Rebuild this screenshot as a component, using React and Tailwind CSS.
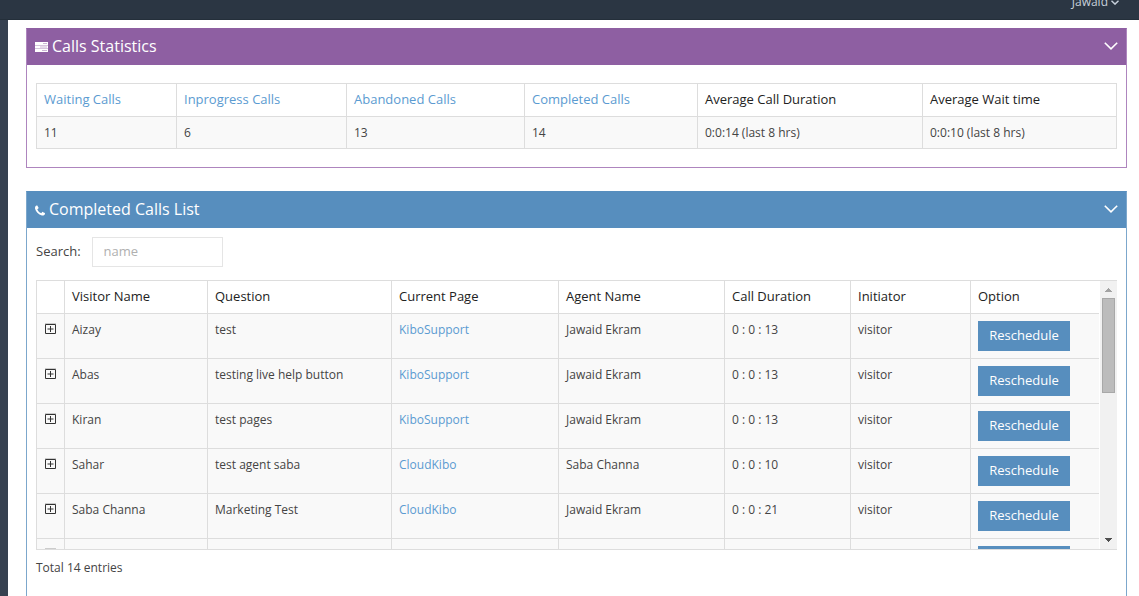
import { useState } from "react";

const STATS = [
  { label: "Waiting Calls", value: "11", link: true, width: "w-[140px]" },
  { label: "Inprogress Calls", value: "6", link: true, width: "w-[170px]" },
  { label: "Abandoned Calls", value: "13", link: true, width: "w-[178px]" },
  { label: "Completed Calls", value: "14", link: true, width: "w-[173px]" },
  { label: "Average Call Duration", value: "0:0:14 (last 8 hrs)", width: "w-[225px]" },
  { label: "Average Wait time", value: "0:0:10 (last 8 hrs)", width: "w-[194px]" },
];

const COLUMNS = [
  { label: "Visitor Name", width: "w-[143px]" },
  { label: "Question", width: "w-[184px]" },
  { label: "Current Page", width: "w-[167px]" },
  { label: "Agent Name", width: "w-[166px]" },
  { label: "Call Duration", width: "w-[126px]" },
  { label: "Initiator", width: "w-[120px]" },
  { label: "Option", width: "w-[129px]" },
];

const CALLS = [
  ["Aizay", "test", "KiboSupport", "Jawaid Ekram", "0 : 0 : 13", "visitor"],
  ["Abas", "testing live help button", "KiboSupport", "Jawaid Ekram", "0 : 0 : 13", "visitor"],
  ["Kiran", "test pages", "KiboSupport", "Jawaid Ekram", "0 : 0 : 13", "visitor"],
  ["Sahar", "test agent saba", "CloudKibo", "Saba Channa", "0 : 0 : 10", "visitor"],
  ["Saba Channa", "Marketing Test", "CloudKibo", "Jawaid Ekram", "0 : 0 : 21", "visitor"],
  ["", "", "", "", "", ""],
];

function TasksIcon() {
  return (
    <svg className="h-[10px] w-[13px]" viewBox="0 0 13 10" fill="none" aria-hidden="true">
      <path fill="#fff" d="M0 0h13v3H0zM0 3.500h13v3H0zM0 7h13v3H0z" />
      <path fill="#8e5fa2" opacity=".45" d="M8 1h4v1H8zM5 4.500h7v1H5zM7 8h5v1H7z" />
      <path fill="#fff" opacity=".55" d="M0 3h13v.5H0zM0 6.500h13v.5H0z" />
    </svg>
  );
}

function PhoneIcon() {
  return (
    <svg className="h-[11px] w-[10px]" viewBox="0 0 1408 1408" fill="#fff" aria-hidden="true">
      <path d="M1408 1112q0 27-10 70.500t-21 68.500q-21 50-122 106-94 51-186 51-27 0-53-3.500t-57.500-12.500-47-14.500-55.500-20.500-49-18q-98-35-175-83-127-79-264-216T152 776q-48-77-83-175-3-9-18-49T30.500 496.500 16 449.500 3.500 392 0 339q0-92 51-186Q107 52 157 31q25-11 68.500-21T296 0q14 0 21 3 18 6 53 76 11 19 30 54t35 63.500 31 53.500q3 4 17.500 25t21.500 35.500 7 28.500q0 20-28.500 50t-62 55-62 53-28.500 46q0 9 5 22.500t8.500 20.500 14 24 11.500 19q76 137 174 235t235 174q2 1 19 11.500t24 14 20.500 8.500 22.500 5q18 0 46-28.500t53-62 55-62 50-28.500q14 0 28.500 7t35.500 21.500 25 17.500q25 15 53.500 31t63.500 35 54 30q70 35 76 53 3 7 3 21z" />
    </svg>
  );
}

function ExpandIcon() {
  return (
    <svg className="block h-3 w-[11px]" viewBox="0 0 11 12" fill="none" stroke="#333" aria-hidden="true">
      <path stroke="#ccc" d="M0 .5h11" />
      <path d="M.5 1.500h10v9H.5zM2.500 6h6M5.500 3v6" />
    </svg>
  );
}

function Chevron({ className, stroke }) {
  return (
    <svg className={className} viewBox="0 0 14 8" fill="none" stroke="currentColor" aria-hidden="true">
      <path strokeWidth={stroke} d="M.8.8 7 6.800 13.200.8" />
    </svg>
  );
}

function Panel({ title, icon, frame, bar, children }) {
  const [open, setOpen] = useState(true);
  return (
    <section className={`border ${frame}`}>
      <header className={`flex h-9 items-center justify-between px-2 pb-[2px] text-white ${bar}`}>
        <h2 className="flex items-center gap-1 text-[16px] leading-5">
          <span className="pt-[2px]">{icon}</span>
          {title}
        </h2>
        <button type="button" aria-label={`Toggle ${title}`} aria-expanded={open} onClick={() => setOpen(!open)}>
          <Chevron className="h-2 w-[14px]" stroke="1.6" />
        </button>
      </header>
      {open && children}
    </section>
  );
}

function StatsTable() {
  return (
    <table className="w-full table-fixed border-separate border-spacing-0 border-r border-b border-[#ddd] text-left">
      <thead>
        <tr>
          {STATS.map((s) => (
            <th key={s.label} className={`h-[33px] border-t border-l border-[#ddd] px-[7px] text-[13px] font-medium text-[#222] ${s.width}`}>
              {s.link ? <a href="#" className="text-[#5b9bd1]">{s.label}</a> : s.label}
            </th>
          ))}
        </tr>
      </thead>
      <tbody>
        <tr>
          {STATS.map((s) => (
            <td key={s.label} className="h-8 border-t border-l border-[#ddd] bg-[#f9f9f9] px-[7px]">
              {s.value}
            </td>
          ))}
        </tr>
      </tbody>
    </table>
  );
}

function CallsTable() {
  const cell = "h-[45px] border-t border-l border-[#ddd] px-[7px] pt-[7px] align-top leading-[18px]";
  return (
    <table className="w-full table-fixed border-separate border-spacing-0 text-left">
      <thead>
        <tr>
          <th className="h-8 w-7 border-l border-[#ddd]" aria-label="Details" />
          {COLUMNS.map((c) => (
            <th key={c.label} className={`h-8 border-l border-[#ddd] px-[7px] text-[13px] font-medium text-[#222] ${c.width}`}>
              {c.label}
            </th>
          ))}
        </tr>
      </thead>
      <tbody className="bg-[#f9f9f9]">
        {CALLS.map(([name, question, page, agent, duration, initiator], i) => (
          <tr key={i}>
            <td className={cell}>
              <button type="button" aria-label="Show details" className="mt-[2px] ml-px block">
                <ExpandIcon />
              </button>
            </td>
            <td className={cell}>{name}</td>
            <td className={cell}>{question}</td>
            <td className={cell}>
              <a href="#" className="text-[#5b9bd1]">{page}</a>
            </td>
            <td className={cell}>{agent}</td>
            <td className={cell}>{duration}</td>
            <td className={cell}>{initiator}</td>
            <td className={cell}>
              <button type="button" className="block h-[30px] w-[92px] bg-[#578ebe] pb-[2px] text-[13px] text-white">
                Reschedule
              </button>
            </td>
          </tr>
        ))}
      </tbody>
    </table>
  );
}

function ScrollTrack() {
  return (
    <div className="flex w-[17px] shrink-0 flex-col items-center bg-[#f1f1f1]" aria-hidden="true">
      <svg className="h-[17px] w-[17px]" viewBox="0 0 17 17" fill="#a3a3a3">
        <path d="M5 11h7v-1h-1V9h-1V8H9V7H8v1H7v1H6v1H5z" />
      </svg>
      <div className="h-[95px] w-[13px] border border-[#a8a8a8] bg-[#bcbcbc]" />
      <svg className="mt-auto h-[17px] w-[17px]" viewBox="0 0 17 17" fill="#505050">
        <path d="M5 6h7v1h-1v1h-1v1H9v1H8V9H7V8H6V7H5z" />
      </svg>
    </div>
  );
}

export default function App() {
  return (
    <div className="flex h-screen flex-col overflow-hidden bg-white font-['Open_Sans',sans-serif] text-[12px] text-[#444]">
      <div className="flex h-5 shrink-0 items-start justify-end border-b border-[#242f3a] bg-[#2b3643] pr-5">
        <button type="button" className="-mt-[7px] flex items-center gap-[3px] text-[12px] leading-[18px] text-[#c6cfda]">
          Jawaid
          <Chevron className="mt-px h-[5px] w-2" stroke="2.6" />
        </button>
      </div>
      <div className="flex min-h-0 flex-1">
        <aside className="w-2 shrink-0 bg-[#364150]" />
        <main className="flex min-w-0 flex-1 flex-col gap-[23px] pt-2 pr-3 pl-[18px]">
          <Panel title="Calls Statistics" icon={<TasksIcon />} frame="border-[#ae85be] border-t-[#8e5fa2]" bar="bg-[#8e5fa2]">
            <div className="py-[18px] pr-[9px] pl-[9px]">
              <StatsTable />
            </div>
          </Panel>
          <Panel title="Completed Calls List" icon={<PhoneIcon />} frame="border-[#7ca7cc] border-t-[#578ebe]" bar="bg-[#578ebe]">
            <div className="px-[9px] pt-[9px] pb-16">
              <div className="flex items-center gap-[11px] text-[13px]">
                <label htmlFor="search">Search:</label>
                <input
                  id="search"
                  type="text"
                  placeholder="name"
                  className="h-[30px] w-[131px] border border-[#e5e5e5] px-[11px] pb-[2px] text-[13px] outline-none placeholder:text-[#b0b0b0]"
                />
              </div>
              <div className="mt-[13px] flex h-[270px] border-t border-b border-[#ddd]">
                <div className="min-w-0 flex-1 overflow-y-auto pr-px [scrollbar-width:none]">
                  <CallsTable />
                </div>
                <ScrollTrack />
              </div>
              <p className="mt-[9px] leading-[18px]">Total 14 entries</p>
            </div>
          </Panel>
        </main>
      </div>
    </div>
  );
}
